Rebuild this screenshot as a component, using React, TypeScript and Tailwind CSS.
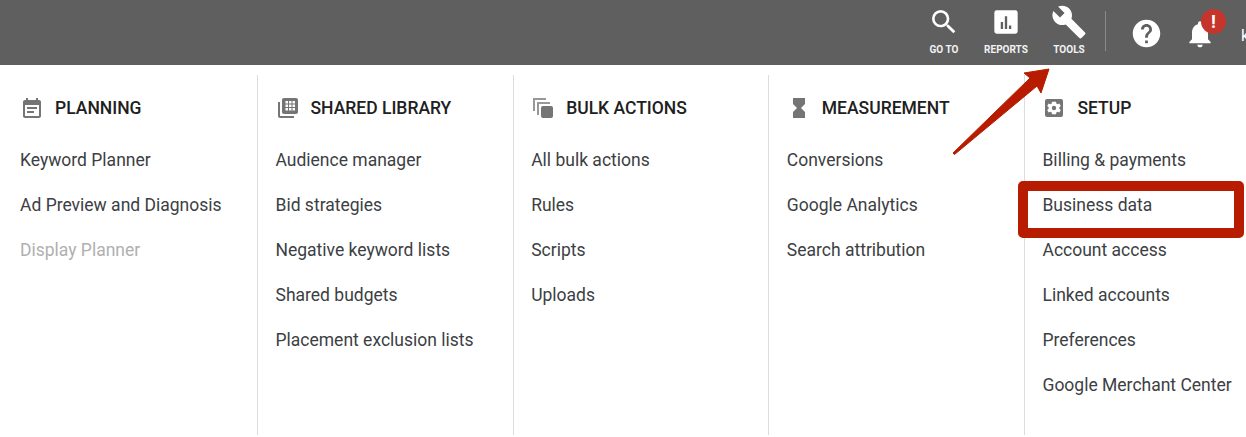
import React from "react";

const Planning = () => (
  <svg viewBox="0 0 24 24" className="w-6 h-6" fill="#757575"><path d="M19 4h-1V2h-2v2H8V2H6v2H5c-1.100 0-2 .9-2 2v14c0 1.100.9 2 2 2h14c1.100 0 2-.9 2-2V6c0-1.100-.9-2-2-2zm0 16H5V9h14v11zM7 11h10v2H7zm0 4h7v2H7z" /></svg>
);
const Library = () => (
  <svg viewBox="0 0 24 24" className="w-6 h-6" fill="#757575"><path d="M4 6H2v14c0 1.100.9 2 2 2h14v-2H4V6z" /><path fillRule="evenodd" d="M20 2H8c-1.100 0-2 .9-2 2v12c0 1.100.9 2 2 2h12c1.100 0 2-.9 2-2V4c0-1.100-.9-2-2-2zM9.500 5h2.500v2.500H9.500zm3.500 0h2.500v2.500H13zm3.500 0H19v2.500h-2.500zm-7 3.500H12V11H9.500zm3.500 0h2.500V11H13zm3.500 0H19V11h-2.500zm-7 3.500H12v2.500H9.500zm3.500 0h2.500v2.500H13zm3.500 0H19v2.500h-2.500z" /></svg>
);
const Bulk = () => (
  <svg viewBox="0 0 24 24" className="w-6 h-6" fill="#757575"><path d="M2 2h13v2H4v11H2z" opacity=".75" /><path d="M6 6h13v2H8v11H6z" opacity=".75" /><rect x="10" y="10" width="12" height="12" rx="2" /></svg>
);
const Hourglass = () => (
  <svg viewBox="0 0 24 24" className="w-6 h-6" fill="#757575"><path d="M6 2v6l4 4-4 4v6h12v-6l-4-4 4-4V2z" /></svg>
);
const Gear = () => (
  <svg viewBox="0 0 24 24" className="w-6 h-6"><rect x="3" y="3" width="18" height="18" rx="2" fill="#757575" /><path fill="#fff" d="M17.300 12.700c0-.2.100-.5.100-.7s0-.5-.1-.7l1.500-1.200-1.500-2.500-1.800.7c-.4-.3-.8-.5-1.200-.7L14 5.700h-4l-.3 1.900c-.4.200-.8.400-1.200.7l-1.800-.7-1.500 2.500 1.500 1.200c0 .2-.1.500-.1.700s0 .5.100.7l-1.500 1.200 1.500 2.500 1.800-.7c.4.300.8.500 1.200.7l.3 1.900h4l.3-1.900c.4-.2.800-.4 1.200-.7l1.800.7 1.500-2.500zM12 14.200a2.200 2.200 0 1 1 0-4.400 2.200 2.200 0 0 1 0 4.400z" /></svg>
);

const columns = [
  { title: "PLANNING", icon: <Planning />, items: ["Keyword Planner", "Ad Preview and Diagnosis", "Display Planner"] },
  { title: "SHARED LIBRARY", icon: <Library />, items: ["Audience manager", "Bid strategies", "Negative keyword lists", "Shared budgets", "Placement exclusion lists"] },
  { title: "BULK ACTIONS", icon: <Bulk />, items: ["All bulk actions", "Rules", "Scripts", "Uploads"] },
  { title: "MEASUREMENT", icon: <Hourglass />, items: ["Conversions", "Google Analytics", "Search attribution"] },
  { title: "SETUP", icon: <Gear />, items: ["Billing & payments", "Business data", "Account access", "Linked accounts", "Preferences", "Google Merchant Center"] },
];

function TopItem({ label, icon, className }: { label: string; icon: React.ReactNode; className: string }) {
  return (
    <div className={`flex flex-col items-center ${className}`}>
      <div className="h-[36px] flex items-center justify-center">{icon}</div>
      <span className="text-[10px] leading-[12px] font-bold text-[#f2f2f2] mt-[4px] whitespace-nowrap">{label}</span>
    </div>
  );
}

export default function App() {
  return (
    <div className="relative w-[1246px] h-[437px] overflow-hidden bg-white" style={{ fontFamily: "Roboto, sans-serif" }}>
      <header className="h-[65px] bg-[#5f5f5f] flex items-start justify-end">
        <TopItem
          className="w-[62px] pt-[4px]"
          label="GO TO"
          icon={
            <svg viewBox="0 0 24 24" className="w-[32px] h-[32px]" fill="#fff"><path d="M15.500 14h-.79l-.28-.27A6.470 6.470 0 0 0 16 9.500 6.500 6.500 0 1 0 9.500 16c1.610 0 3.090-.59 4.230-1.570l.27.28v.79l5 4.990L20.490 19l-4.990-5zm-6 0C7.010 14 5 11.990 5 9.500S7.010 5 9.500 5 14 7.010 14 9.500 11.990 14 9.500 14z" /></svg>
          }
        />
        <TopItem
          className="w-[62px] pt-[4px]"
          label="REPORTS"
          icon={
            <svg viewBox="0 0 24 24" className="w-[28px] h-[28px]" fill="#fff"><path fillRule="evenodd" d="M20 2H4a2 2 0 0 0-2 2v16a2 2 0 0 0 2 2h16a2 2 0 0 0 2-2V4a2 2 0 0 0-2-2zM7.500 12h2v6h-2zm3.500-5h2v11h-2zm3.500 8h2v3h-2z" /></svg>
          }
        />
        <TopItem
          className="w-[64px] pt-[4px]"
          label="TOOLS"
          icon={
            <svg viewBox="0 0 24 24" className="w-[36px] h-[36px]" fill="#fff"><path d="M22.700 19l-9.100-9.100c.9-2.300.4-5-1.500-6.900-2-2-5-2.400-7.400-1.300L9 6 6 9 1.600 4.700C.4 7.100.9 10.100 2.900 12.100c1.900 1.900 4.600 2.400 6.900 1.500l9.100 9.100c.4.400 1 .4 1.400 0l2.300-2.300c.5-.4.500-1.100.1-1.400z" /></svg>
          }
        />
        <div className="w-px h-[40px] bg-[#8a8a8a] mt-[11px] ml-[4px] mr-[25px]" />
        <div className="w-[30px] h-[65px] flex items-center justify-center pt-[1px] mr-[22px]">
          <svg viewBox="0 0 24 24" className="w-[33px] h-[33px] shrink-0" fill="#fff"><path d="M12 2C6.480 2 2 6.480 2 12s4.480 10 10 10 10-4.480 10-10S17.520 2 12 2zm1 17h-2v-2h2v2zm2.070-7.750l-.9.920C13.450 12.900 13 13.500 13 15h-2v-.5c0-1.100.45-2.100 1.170-2.830l1.240-1.260c.37-.36.590-.86.590-1.410 0-1.100-.9-2-2-2s-2 .9-2 2H8c0-2.210 1.790-4 4-4s4 1.790 4 4c0 .88-.36 1.680-.93 2.250z" /></svg>
        </div>
        <div className="relative w-[34px] h-[65px] flex items-center justify-center mr-[24px]">
          <svg viewBox="0 0 24 24" className="w-[32px] h-[32px] shrink-0 mt-[2px]" fill="#fff"><path d="M12 22c1.100 0 2-.9 2-2h-4c0 1.100.9 2 2 2zm6-6v-5c0-3.070-1.630-5.640-4.500-6.320V4c0-.83-.67-1.500-1.500-1.500s-1.500.67-1.500 1.500v.68C7.640 5.360 6 7.920 6 11v5l-2 2v1h16v-1l-2-2z" /></svg>
          <span className="absolute left-[18px] top-[8.500px] w-[25px] h-[25px] rounded-full bg-[#c5352b] text-white text-[18px] font-bold leading-[25px] text-center">!</span>
        </div>
        <span className="w-[9px] -mr-[4px] shrink-0 overflow-hidden text-[16px] leading-[19px] text-white pt-[26px]">k</span>
      </header>

      <main className="flex h-[370px] pt-[10px]">
        {columns.map((c, i) => (
          <section key={c.title} className={`shrink-0 ${i > 0 ? "w-[255.67px] border-l border-[#dcdcdc] pl-[17.5px]" : "w-[257px] pl-[20px]"}`}>
            <div className="h-[45px] flex items-center mt-[10px]">
              <span className="w-[24px] h-[24px] shrink-0">{c.icon}</span>
              <span className="ml-[11px] text-[17.5px] leading-[24px] font-medium text-[#202020] whitespace-nowrap">{c.title}</span>
            </div>
            <ul className="mt-[8px]">
              {c.items.map((it) => (
                <li key={it} className={`h-[45px] leading-[45px] text-[17.5px] whitespace-nowrap ${it === "Display Planner" ? "text-[#b0b0b0]" : "text-[#3c4043]"}`}>
                  {it}
                </li>
              ))}
            </ul>
          </section>
        ))}
      </main>

      <svg className="absolute left-[945px] top-[62px] w-[115px] h-[100px]" viewBox="0 0 115 100">
        <path d="M8 91 L85 16 L79 11 L104 7 L96 31 L92 24 L9.500 92.500 Z" fill="#b71c00" stroke="#b71c00" strokeWidth="1" strokeLinejoin="round" />
      </svg>
      <div className="absolute left-[1018px] top-[181px] w-[225.500px] h-[57px] border-[10px] border-[#b71c00] rounded-[5px]" />
    </div>
  );
}
